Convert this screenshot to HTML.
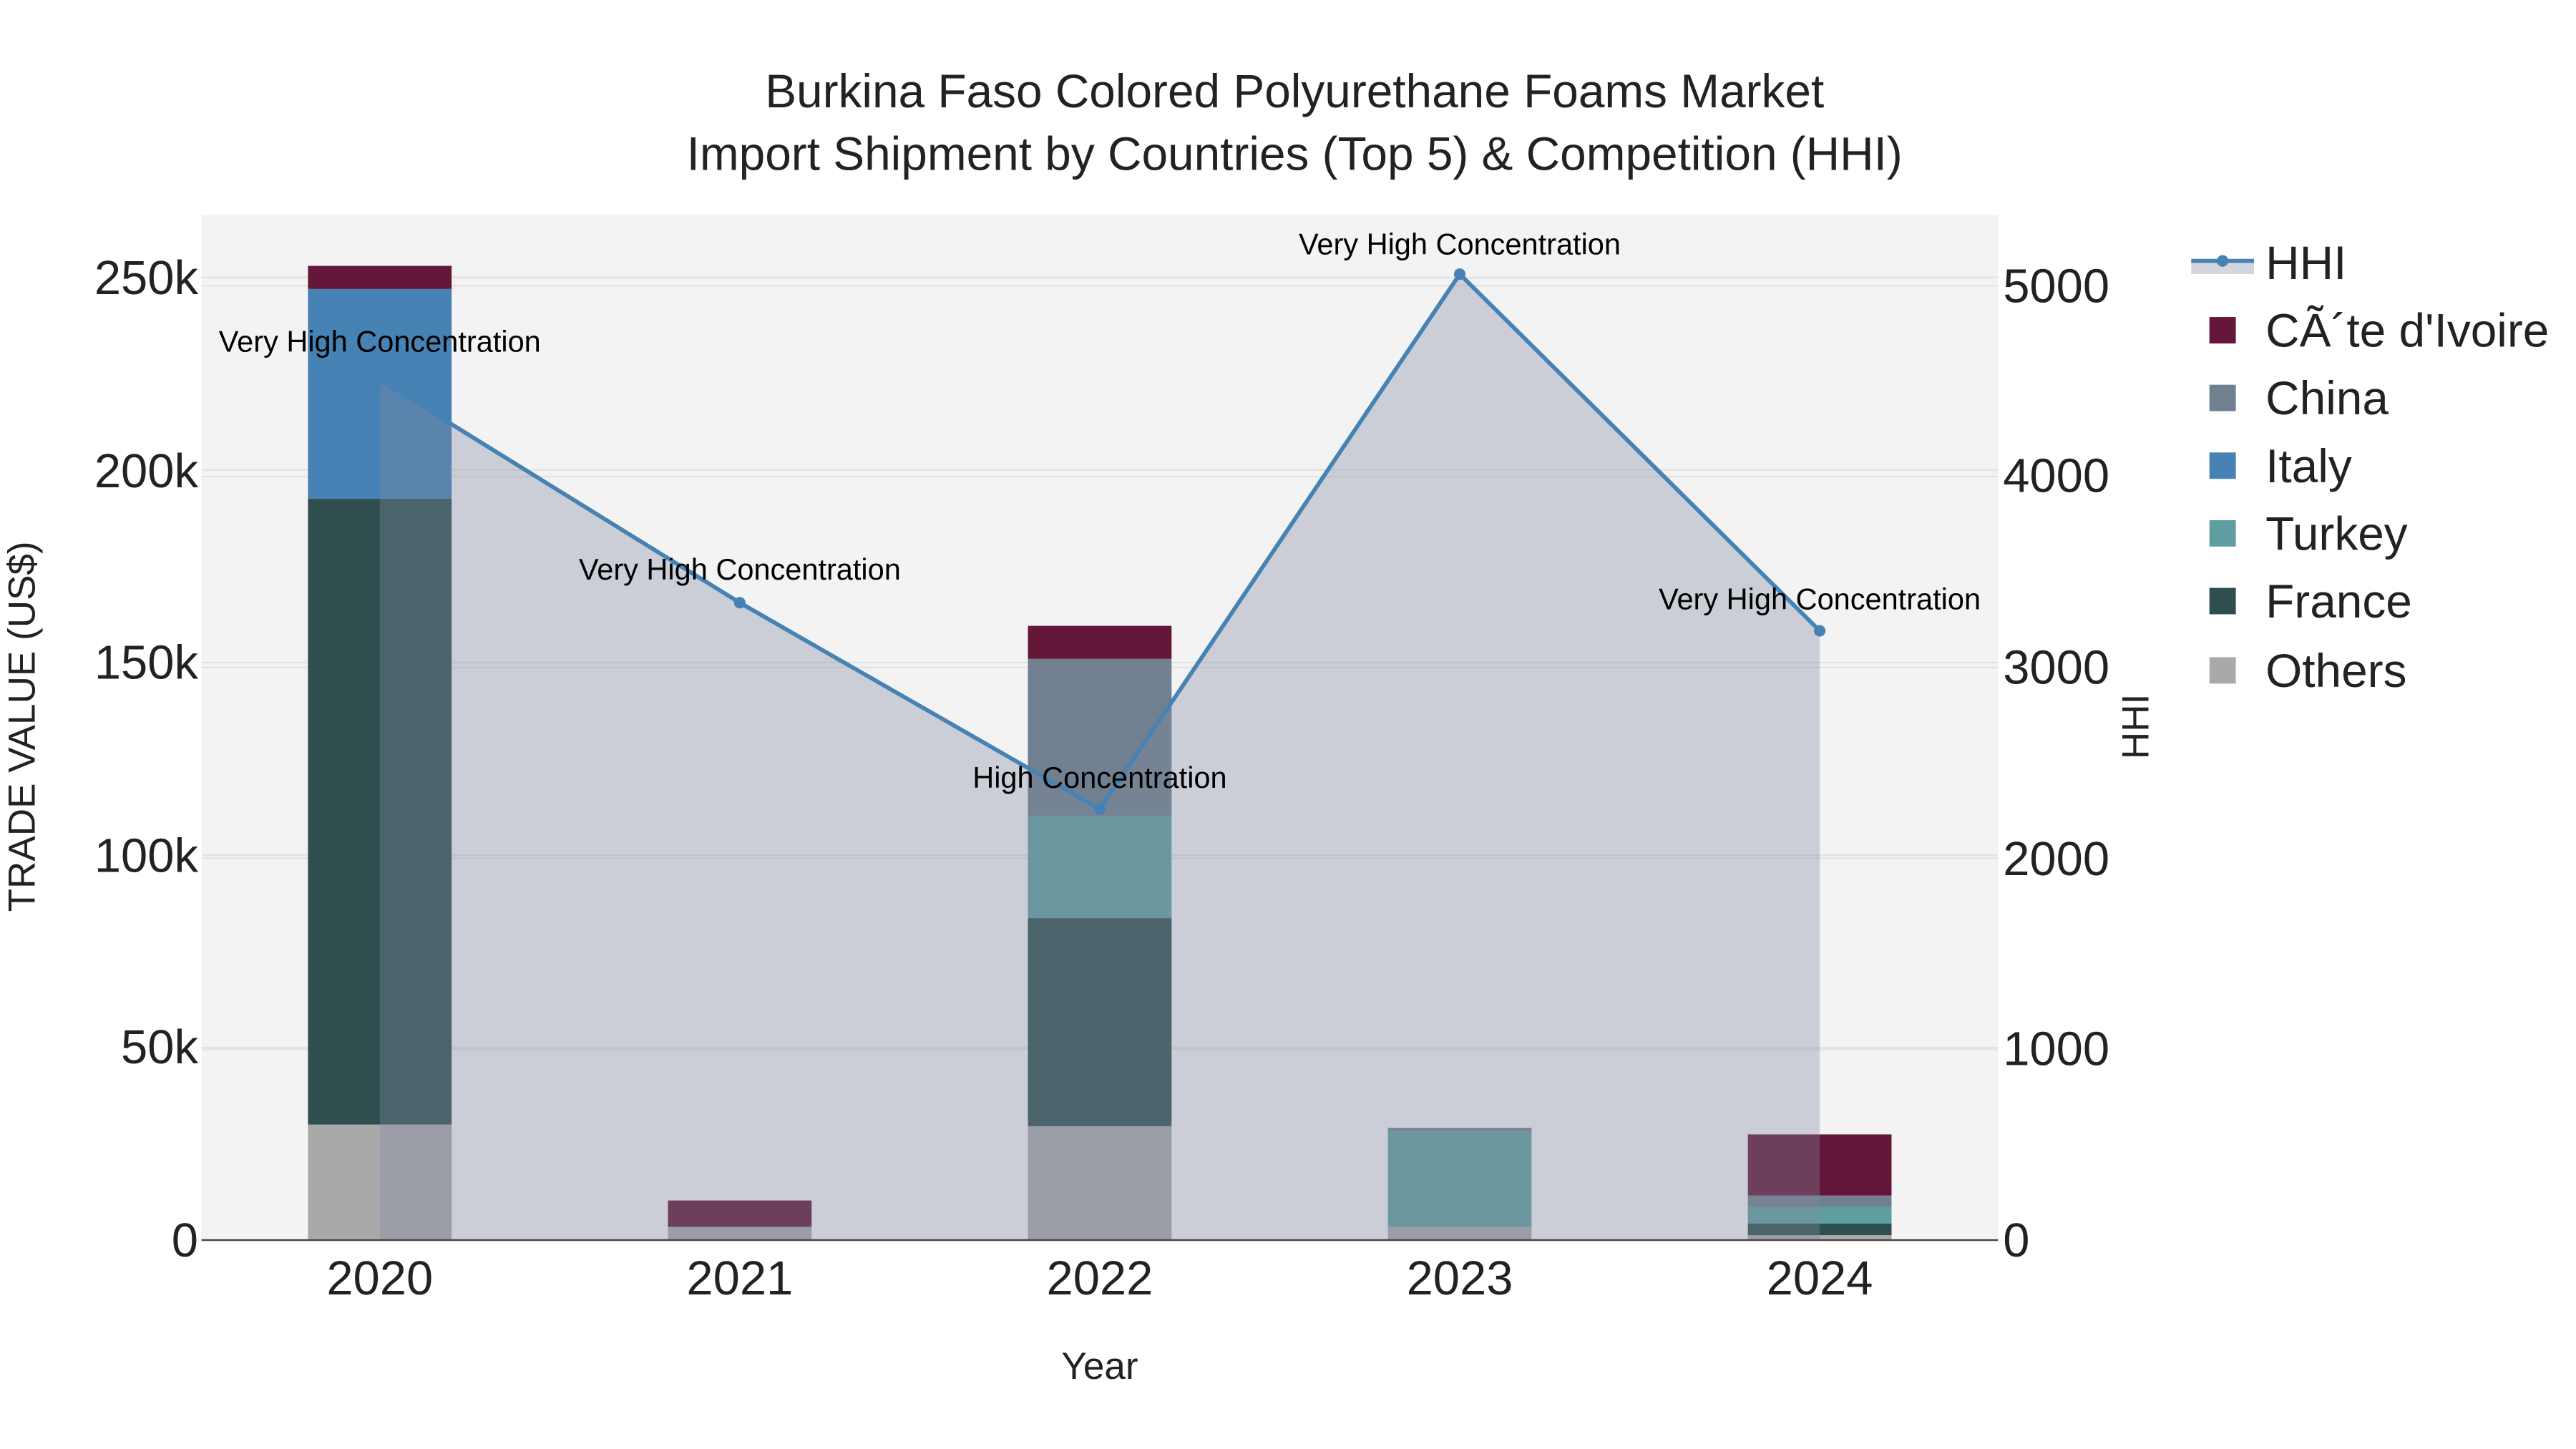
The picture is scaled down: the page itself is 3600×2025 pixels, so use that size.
<!DOCTYPE html>
<html><head><meta charset="utf-8"><style>
html,body{margin:0;padding:0;background:#fff;}
svg{display:block;font-family:"Liberation Sans",sans-serif;}
</style></head><body>
<svg width="3600" height="2025" viewBox="0 0 1560 877.5" xmlns="http://www.w3.org/2000/svg">
<rect x="0" y="0" width="1560" height="877.5" fill="#fff"/>
<rect x="122" y="130" width="1088" height="621" fill="#f3f3f3"/>
<g stroke="#e2e2e2" stroke-width="1">
<line x1="122" x2="1210" y1="634.4" y2="634.4"/>
<line x1="122" x2="1210" y1="517.8" y2="517.8"/>
<line x1="122" x2="1210" y1="401.2" y2="401.2"/>
<line x1="122" x2="1210" y1="284.6" y2="284.6"/>
<line x1="122" x2="1210" y1="168" y2="168"/>
<line x1="122" x2="1210" y1="635.4" y2="635.4"/>
<line x1="122" x2="1210" y1="519.8" y2="519.8"/>
<line x1="122" x2="1210" y1="404.2" y2="404.2"/>
<line x1="122" x2="1210" y1="288.6" y2="288.6"/>
<line x1="122" x2="1210" y1="173" y2="173"/>
</g>
<rect x="186.5" y="681" width="87" height="70" fill="#a9a9a9"/>
<rect x="186.5" y="302" width="87" height="379" fill="#2f4f4f"/>
<rect x="186.5" y="175" width="87" height="127" fill="#4682b4"/>
<rect x="186.5" y="161" width="87" height="14" fill="#641739"/>
<rect x="404.5" y="743" width="87" height="8" fill="#a9a9a9"/>
<rect x="404.5" y="727" width="87" height="16" fill="#641739"/>
<rect x="622.5" y="682" width="87" height="69" fill="#a9a9a9"/>
<rect x="622.5" y="556" width="87" height="126" fill="#2f4f4f"/>
<rect x="622.5" y="494" width="87" height="62" fill="#5f9ea0"/>
<rect x="622.5" y="399" width="87" height="95" fill="#708090"/>
<rect x="622.5" y="379" width="87" height="20" fill="#641739"/>
<rect x="840.5" y="743" width="87" height="8" fill="#a9a9a9"/>
<rect x="840.5" y="685" width="87" height="58" fill="#5f9ea0"/>
<rect x="840.5" y="683" width="87" height="2" fill="#708090"/>
<rect x="1058.5" y="748" width="87" height="3" fill="#a9a9a9"/>
<rect x="1058.5" y="741" width="87" height="7" fill="#2f4f4f"/>
<rect x="1058.5" y="731" width="87" height="10" fill="#5f9ea0"/>
<rect x="1058.5" y="724" width="87" height="7" fill="#708090"/>
<rect x="1058.5" y="687" width="87" height="37" fill="#641739"/>
<polygon points="230,230 448,365 666,490 884,166 1102,382 1102,751 230,751" fill="rgba(128,138,160,0.35)"/>
<polyline points="230,230 448,365 666,490 884,166 1102,382" fill="none" stroke="#4682b4" stroke-width="2.5"/>
<g fill="#4682b4"><circle cx="230" cy="230" r="3.5"/><circle cx="448" cy="365" r="3.5"/><circle cx="666" cy="490" r="3.5"/><circle cx="884" cy="166" r="3.5"/><circle cx="1102" cy="382" r="3.5"/></g>
<line x1="122" x2="1210" y1="751" y2="751" stroke="#444" stroke-width="1"/>
<g font-size="18" fill="#000" text-anchor="middle">
<text x="230" y="213">Very High Concentration</text>
<text x="448" y="351">Very High Concentration</text>
<text x="666" y="477">High Concentration</text>
<text x="884" y="154">Very High Concentration</text>
<text x="1102" y="369">Very High Concentration</text>
</g>
<g font-size="29" fill="#222" text-anchor="end">
<text x="120" y="761">0</text>
<text x="120" y="644">50k</text>
<text x="120" y="528">100k</text>
<text x="120" y="411">150k</text>
<text x="120" y="295">200k</text>
<text x="120" y="178">250k</text>
</g>
<g font-size="29" fill="#222" text-anchor="start">
<text x="1213" y="761">0</text>
<text x="1213" y="645">1000</text>
<text x="1213" y="530">2000</text>
<text x="1213" y="414">3000</text>
<text x="1213" y="298">4000</text>
<text x="1213" y="183">5000</text>
</g>
<g font-size="29" fill="#222" text-anchor="middle">
<text x="230" y="784">2020</text>
<text x="448" y="784">2021</text>
<text x="666" y="784">2022</text>
<text x="884" y="784">2023</text>
<text x="1102" y="784">2024</text>
</g>
<text x="666" y="835" font-size="23" fill="#222" text-anchor="middle">Year</text>
<text transform="translate(21,440) rotate(-90)" font-size="23" fill="#222" text-anchor="middle">TRADE VALUE (US$)</text>
<text transform="translate(1301,440) rotate(-90)" font-size="23" fill="#222" text-anchor="middle">HHI</text>
<g font-size="28.5" fill="#222" text-anchor="middle">
<text x="784" y="65">Burkina Faso Colored Polyurethane Foams Market</text>
<text x="784" y="103">Import Shipment by Countries (Top 5) &amp; Competition (HHI)</text>
</g>
<rect x="1327" y="158" width="38" height="8" fill="rgba(128,138,160,0.35)"/>
<line x1="1327" x2="1365" y1="158" y2="158" stroke="#4682b4" stroke-width="2.5"/>
<circle cx="1346" cy="158" r="3.5" fill="#4682b4"/>
<rect x="1338" y="192" width="16" height="16" fill="#641739"/>
<rect x="1338" y="233" width="16" height="16" fill="#708090"/>
<rect x="1338" y="274" width="16" height="16" fill="#4682b4"/>
<rect x="1338" y="315" width="16" height="16" fill="#5f9ea0"/>
<rect x="1338" y="356" width="16" height="16" fill="#2f4f4f"/>
<rect x="1338" y="398" width="16" height="16" fill="#a9a9a9"/>
<g font-size="28.5" fill="#222">
<text x="1372" y="169">HHI</text>
<text x="1372" y="210">CÃ´te d'Ivoire</text>
<text x="1372" y="251">China</text>
<text x="1372" y="292">Italy</text>
<text x="1372" y="333">Turkey</text>
<text x="1372" y="374">France</text>
<text x="1372" y="416">Others</text>
</g>
</svg>
</body></html>
